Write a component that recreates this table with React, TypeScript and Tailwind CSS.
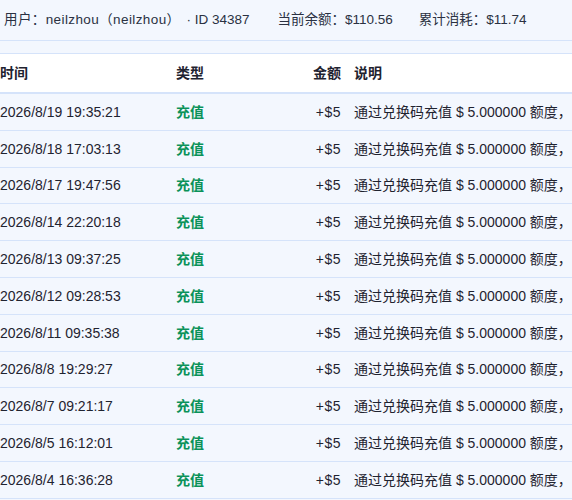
const rows = [
  "2026/8/19 19:35:21",
  "2026/8/18 17:03:13",
  "2026/8/17 19:47:56",
  "2026/8/14 22:20:18",
  "2026/8/13 09:37:25",
  "2026/8/12 09:28:53",
  "2026/8/11 09:35:38",
  "2026/8/8 19:29:27",
  "2026/8/7 09:21:17",
  "2026/8/5 16:12:01",
  "2026/8/4 16:36:28",
];

function App() {
  return (
    <div
      className="w-[572px] h-[500px] overflow-hidden bg-[#f3f7fe] text-[#1f2330]"
      style={{ fontFamily: '"Liberation Sans", "Noto Sans CJK SC", sans-serif' }}
    >
      <div className="h-[41px] flex items-center pl-1 text-[13.5px] text-[#2a3142] border-b border-[#d5e3fa] whitespace-nowrap">
        <span className="shrink-0 tracking-[0.4px]">用户：neilzhou（neilzhou）</span>
        <span className="shrink-0 ml-[6px]">· ID 34387</span>
        <span className="shrink-0 ml-[28px]">当前余额：$110.56</span>
        <span className="shrink-0 ml-[26px]">累计消耗：$11.74</span>
      </div>
      <div className="mt-3 border-t border-[#d5e3fa]">
        <div className="h-[40px] bg-white flex items-center text-sm font-semibold border-b-2 border-[#d5e3fa]">
          <div className="w-[176px]">时间</div>
          <div className="w-[100px]">类型</div>
          <div className="w-[65px] text-right">金额</div>
          <div className="pl-[13px]">说明</div>
        </div>
        {rows.map((t) => (
          <div
            key={t}
            className="h-[36.8px] flex items-center text-sm border-b border-[#d5e3fa] whitespace-nowrap"
          >
            <div className="w-[176px] shrink-0">{t}</div>
            <div className="w-[100px] shrink-0 text-[#0a9259] font-semibold">充值</div>
            <div className="w-[65px] shrink-0 text-right tracking-[0.5px]">+$5</div>
            <div className="pl-[13px]">通过兑换码充值 $ 5.000000 额度，</div>
          </div>
        ))}
      </div>
    </div>
  );
}

export default App;
